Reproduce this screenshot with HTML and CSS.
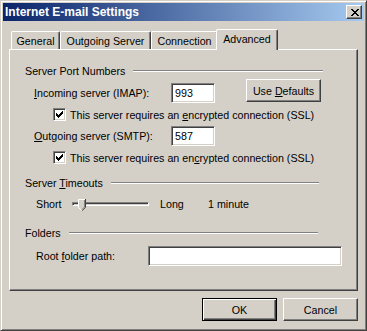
FILE: index.html
```html
<!DOCTYPE html>
<html lang="en">
<head>
	<meta charset="utf-8">
	<title>Internet E-mail Settings</title>
	<link rel="stylesheet" href="styles.css">
</head>
<body>
	<section class="window">
		<header class="titlebar">
			<span class="title">Internet E-mail Settings</span>
			<span class="closeBtn">
				<svg width="8" height="7" viewBox="0 0 8 7"><path d="M0 0h2v1h-2zM6 0h2v1h-2zM1 1h2v1h-2zM5 1h2v1h-2zM2 2h4v1h-4zM3 3h2v1h-2zM2 4h4v1h-4zM1 5h2v1h-2zM5 5h2v1h-2zM0 6h2v1h-2zM6 6h2v1h-2z" fill="#000"/></svg>
			</span>
		</header>

		<section class="content">
			<nav class="tabs">
				<span class="tab tab_general">General</span>
				<span class="tab tab_outgoing">Outgoing Server</span>
				<span class="tab tab_connection">Connection</span>
				<span class="tab tab_advanced tab_active">Advanced</span>
			</nav>

			<section class="panel">
				<!-- port numbers -->
				<div class="groupHead"><span>Server Port Numbers</span><span class="rule"></span></div>
				<div class="row portRow">
					<span class="portLabel"><u>I</u>ncoming server (IMAP):</span>
					<span class="field portField">993</span>
					<span class="btn defaultsBtn"><span>Use <u>D</u>efaults</span></span>
				</div>
				<div class="row checkRow">
					<span class="check"><svg width="7" height="7" viewBox="0 0 7 7"><path d="M6 0h1v3h-1zM5 1h1v3h-1zM4 2h1v3h-1zM0 2h1v3h-1zM1 3h1v3h-1zM2 4h1v3h-1zM3 3h1v3h-1z" fill="#000"/></svg></span>
					<span>This server requires an <u>e</u>ncrypted connection (SSL)</span>
				</div>
				<div class="row portRow portRow_second">
					<span class="portLabel"><u>O</u>utgoing server (SMTP):</span>
					<span class="field portField">587</span>
				</div>
				<div class="row checkRow">
					<span class="check"><svg width="7" height="7" viewBox="0 0 7 7"><path d="M6 0h1v3h-1zM5 1h1v3h-1zM4 2h1v3h-1zM0 2h1v3h-1zM1 3h1v3h-1zM2 4h1v3h-1zM3 3h1v3h-1z" fill="#000"/></svg></span>
					<span>This server requires an en<u>c</u>rypted connection (SSL)</span>
				</div>

				<!-- timeouts -->
				<div class="groupHead groupHead_timeouts"><span>Server <u>T</u>imeouts</span><span class="rule"></span></div>
				<div class="row sliderRow">
					<span class="sliderShort">Short</span>
					<span class="track">
						<svg class="thumb" width="8" height="12" viewBox="0 0 8 12">
							<path d="M0 0H8V8L4 12L0 8Z" fill="#D4D0C8"/>
							<path d="M0.5 8.5V0.5H7" stroke="#fff" fill="none"/>
							<path d="M7.5 0V8.3L4 11.8" stroke="#404040" fill="none"/>
							<path d="M6.5 1V8L4 10.5" stroke="#808080" fill="none"/>
							<path d="M0.5 8.5L3.5 11.5" stroke="#fff" fill="none"/>
						</svg>
					</span>
					<span class="sliderLong">Long</span>
					<span>1 minute</span>
				</div>

				<!-- folders -->
				<div class="groupHead groupHead_folders"><span>Folders</span><span class="rule"></span></div>
				<div class="row folderRow">
					<span class="folderLabel">Root <u>f</u>older path:</span>
					<span class="field folderField"></span>
				</div>
			</section>

			<footer class="buttons">
				<span class="btn btn_default">OK</span>
				<span class="btn">Cancel</span>
			</footer>
		</section>
	</section>
</body>
</html>
```

FILE: styles.css
```css
html, body{ width:100%; height:100%; margin:0px; overflow:hidden; background-color:#D4D0C8; font-size:10.7px; font-family:"Liberation Sans", Arial, sans-serif; color:#000; }
u{ text-decoration:underline; text-underline-offset:1px; }

.window{
	width:367px; height:331px;
	box-sizing:border-box;
	display:flex; flex-direction:column;
	padding:2px;
	background-color:#D4D0C8;
	border:1px solid; border-color:#D4D0C8 #404040 #404040 #D4D0C8;
	box-shadow:inset 1px 1px #fff, inset -1px -1px #808080;
}

.titlebar{
	height:18px;
	display:flex; align-items:center; justify-content:space-between;
	padding:0px 2px;
	background:linear-gradient(to right, #0A246A, #A6CAF0);
}
.title{ color:#fff; font-weight:bold; font-size:12px; }
.closeBtn{
	width:16px; height:14px;
	box-sizing:border-box;
	display:flex; align-items:center; justify-content:center;
	padding-left:1px;
	background-color:#D4D0C8;
	border:1px solid; border-color:#fff #404040 #404040 #fff;
	box-shadow:inset -1px -1px #808080;
}
.closeBtn svg{ display:block; }

.content{ padding:8px 6px 0px 6px; }

.tabs{ height:20px; display:flex; align-items:flex-end; padding-left:2px; }
.tab{
	height:18px;
	box-sizing:border-box;
	display:flex; align-items:center; justify-content:center;
	padding-top:1px;
	border:1px solid; border-bottom:0px; border-color:#fff #404040 #fff #fff;
	border-radius:2px 2px 0px 0px;
	box-shadow:inset -1px 0px #808080;
	background-color:#D4D0C8;
}
.tab_general{ width:49px; }
.tab_outgoing{ width:91px; }
.tab_connection{ width:67px; }
.tab_advanced{ width:62px; }
.tab_active{
	height:21px;
	margin:0px -2px -1px -2px;
	padding-top:0px; padding-bottom:3px;
	position:relative; z-index:1;
}

.panel{
	height:242px;
	box-sizing:border-box;
	padding:14px 0px 0px 15px;
	border:1px solid; border-color:#fff #404040 #404040 #fff;
	box-shadow:inset -1px -1px #808080;
}

.groupHead{ height:14px; display:flex; align-items:center; margin-right:34px; }
.groupHead_timeouts{ margin-top:12px; margin-right:38px; }
.groupHead_folders{ margin-top:15px; margin-right:39px; }
.rule{ flex:1; height:0px; margin-left:8px; border-top:1px solid #808080; border-bottom:1px solid #fff; }

.row{ display:flex; align-items:center; }
.portRow{ height:20px; margin-top:5px; padding-left:9px; }
.portLabel{ width:137px; }
.checkRow{ height:13px; margin-top:5px; padding-left:28px; }
.sliderRow{ height:14px; margin-top:7px; padding-left:11px; }
.folderRow{ height:20px; margin-top:6px; padding-left:11px; }
.folderLabel{ width:112px; }

.field{
	height:20px;
	box-sizing:border-box;
	display:flex; align-items:center;
	padding:0px 3px;
	background-color:#fff;
	border:1px solid; border-color:#808080 #fff #fff #808080;
	box-shadow:inset 1px 1px #404040, inset -1px -1px #D4D0C8;
}
.portField{ width:44px; }
.folderField{ width:194px; }

.check{
	width:13px; height:13px;
	box-sizing:border-box;
	margin-right:4px;
	padding:2px;
	background-color:#fff;
	border:1px solid; border-color:#808080 #fff #fff #808080;
	box-shadow:inset 1px 1px #404040, inset -1px -1px #D4D0C8;
}
.check svg{ display:block; }

.sliderShort{ width:36px; }
.sliderLong{ width:48px; margin-left:11px; }
.track{
	width:77px; height:4px;
	box-sizing:border-box;
	margin-top:-1px;
	position:relative;
	border:1px solid; border-color:#808080 #fff #fff #808080;
	box-shadow:inset 1px 1px #404040;
}
.thumb{ position:absolute; left:5px; top:-4px; display:block; }

.btn{
	width:75px; height:23px;
	box-sizing:border-box;
	display:flex; align-items:center; justify-content:center;
	background-color:#D4D0C8;
	border:1px solid; border-color:#fff #404040 #404040 #fff;
	box-shadow:inset -1px -1px #808080;
}
.btn_default{
	border-color:#000;
	box-shadow:inset 1px 1px #fff, inset -1px -1px #404040, inset -2px -2px #808080;
}
.defaultsBtn{ align-self:flex-start; margin-top:-4px; margin-left:31px; }

.buttons{ display:flex; justify-content:flex-end; gap:6px; margin-top:7px; }
```
